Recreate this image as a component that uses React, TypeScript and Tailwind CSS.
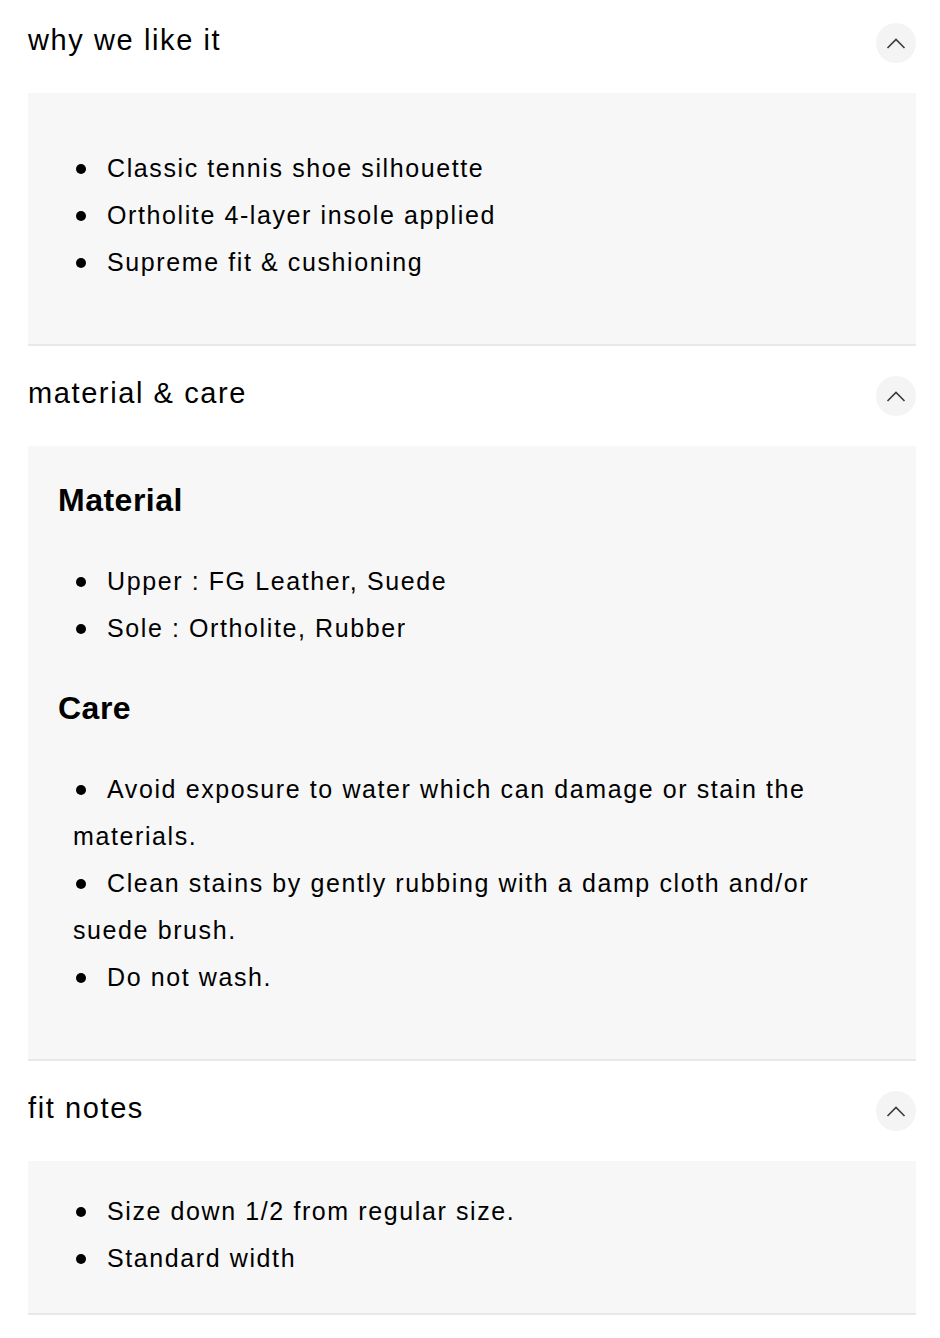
import React from 'react';

const font = { fontFamily: '"Liberation Sans", Arial, Helvetica, sans-serif' };

const Chevron: React.FC = () => (
  <span className="flex h-10 w-10 items-center justify-center rounded-full bg-[#f4f4f4]">
    <svg width="20" height="11" viewBox="0 0 20 11" fill="none">
      <path d="M1.5 10 L10 1.5 L18.5 10" stroke="#3a3a3a" strokeWidth="1.6" />
    </svg>
  </span>
);

const Header: React.FC<{ title: string }> = ({ title }) => (
  <div className="flex h-[100px] items-center justify-between">
    <span className="mb-[6px] text-[29px] leading-[36px] tracking-[1.6px] text-black">{title}</span>
    <Chevron />
  </div>
);

const Bullets: React.FC<{ items: string[]; className?: string }> = ({ items, className }) => (
  <ul className={`pl-[15px] pr-[2px] ${className ?? ''}`}>
    {items.map((item) => (
      <li key={item} className="text-[25px] leading-[47px] tracking-[1.6px] text-black">
        <span className="inline-block w-[34px] align-middle">
          <span className="ml-[3px] mb-[3px] block h-[10px] w-[10px] rounded-full bg-black" />
        </span>
        {item}
      </li>
    ))}
  </ul>
);

const Panel: React.FC<{ className: string; children: React.ReactNode }> = ({ className, children }) => (
  <div className={`border-b-2 border-[#e8e8e8] bg-[#f7f7f7] px-[30px] ${className}`}>{children}</div>
);

export default function App() {
  return (
    <div className="-mt-[7px] bg-white pl-[28px] pr-[24px] pb-[40px] antialiased" style={font}>
      <Header title="why we like it" />
      <Panel className="pt-[52px] pb-[58px]">
        <Bullets
          items={[
            'Classic tennis shoe silhouette',
            'Ortholite 4-layer insole applied',
            'Supreme fit & cushioning',
          ]}
        />
      </Panel>

      <Header title="material & care" />
      <Panel className="pt-[30px] pb-[58px]">
        <h3 className="text-[32px] font-bold leading-[48px] tracking-[0.5px] text-black">Material</h3>
        <Bullets className="mt-[34px]" items={['Upper : FG Leather, Suede', 'Sole : Ortholite, Rubber']} />
        <h3 className="mt-[32px] text-[32px] font-bold leading-[48px] tracking-[0.5px] text-black">Care</h3>
        <Bullets
          className="mt-[34px]"
          items={[
            'Avoid exposure to water which can damage or stain the materials.',
            'Clean stains by gently rubbing with a damp cloth and/or suede brush.',
            'Do not wash.',
          ]}
        />
      </Panel>

      <Header title="fit notes" />
      <Panel className="pt-[27px] pb-[31px]">
        <Bullets items={['Size down 1/2 from regular size.', 'Standard width']} />
      </Panel>
    </div>
  );
}
